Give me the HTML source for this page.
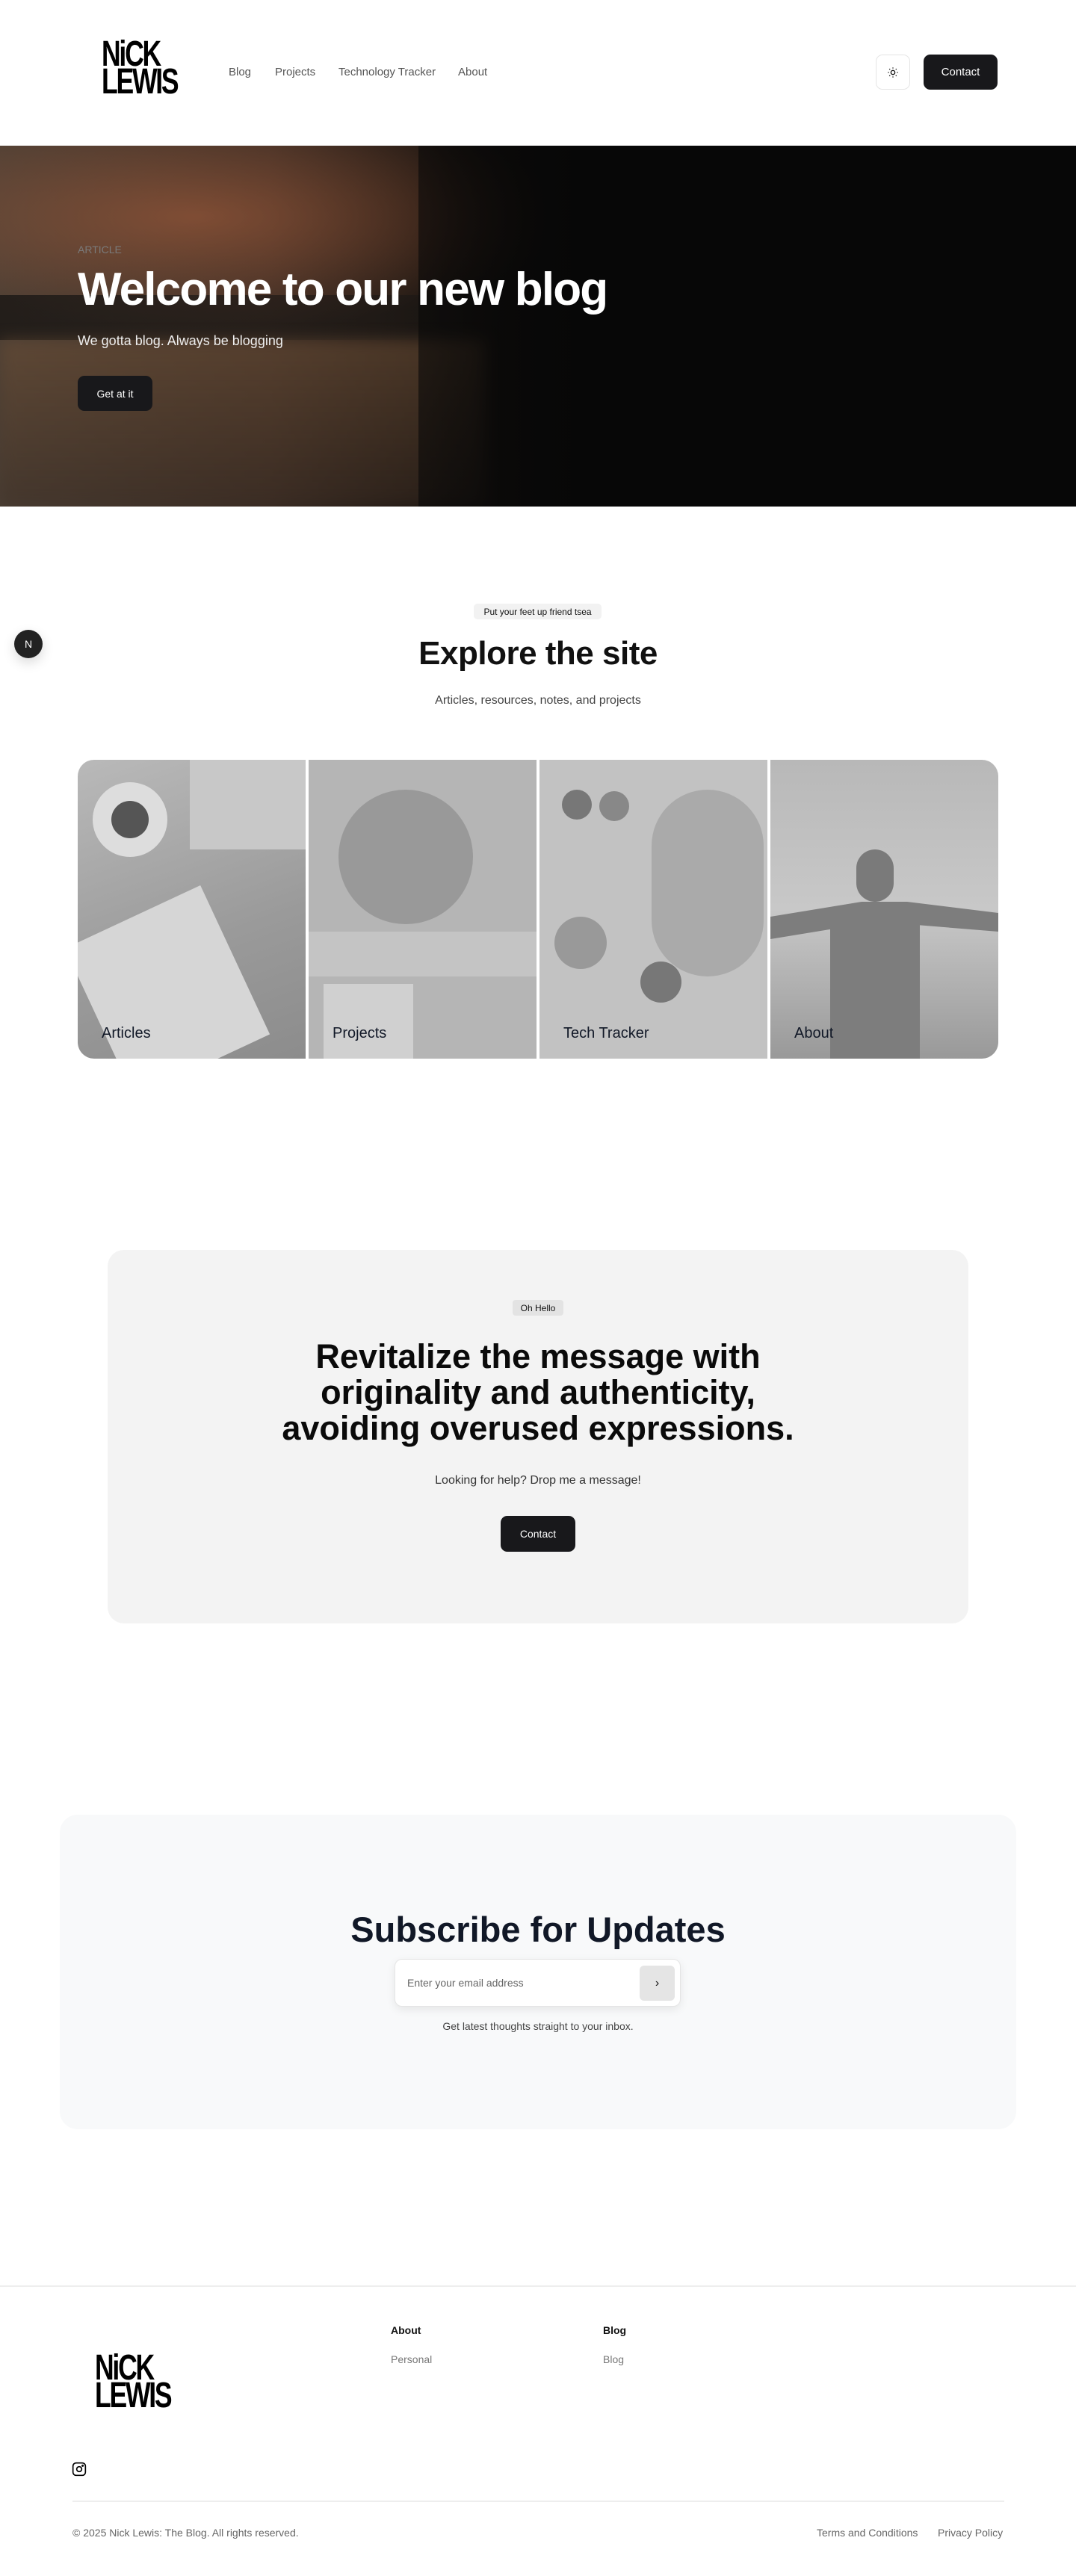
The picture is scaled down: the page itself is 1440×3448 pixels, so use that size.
<!DOCTYPE html>
<html><head><meta charset="utf-8"><style>
*{margin:0;padding:0;box-sizing:border-box}
body{width:1440px;height:3448px;background:#fff;font-family:"Liberation Sans",sans-serif;color:#111;position:relative;overflow:hidden}
.abs{position:absolute}
.logo{font-weight:700;color:#000;line-height:37px;font-size:48px;letter-spacing:-3px;transform:scaleX(.74);transform-origin:left top}
.nav a{position:absolute;top:88px;font-size:15px;color:#555;text-decoration:none}
.btn{position:absolute;background:#18181b;color:#fff;border-radius:9px;font-size:15px;display:flex;align-items:center;justify-content:center}
.hero{left:0;top:195px;width:1440px;height:483px;overflow:hidden;background:linear-gradient(90deg,#4a3e34 0%,#3a2c24 25%,#1a1410 42%,#0a0908 60%,#050505 100%)}
.card{position:absolute;top:1017px;height:400px;width:305px;overflow:hidden;background:#a9a9a9}
.card span{position:absolute;left:32px;bottom:22px;font-size:20px;color:#111827}
</style></head><body>
<div class="abs logo" style="left:136px;top:54px">NiCK<br>LEWIS</div>
<div class="nav"><a style="left:306px">Blog</a><a style="left:368px">Projects</a><a style="left:453px">Technology Tracker</a><a style="left:613px">About</a></div>
<div class="abs" style="left:1172px;top:73px;width:46px;height:47px;border:1px solid #e5e5e5;border-radius:9px;display:flex;align-items:center;justify-content:center">
<svg width="16" height="16" viewBox="0 0 24 24" fill="none" stroke="#111" stroke-width="2"><circle cx="12" cy="12" r="4"/><path d="M12 2v2M12 20v2M4.9 4.9l1.4 1.4M17.7 17.7l1.4 1.4M2 12h2M20 12h2M4.9 19.1l1.4-1.4M17.7 6.3l1.4-1.4"/></svg></div>
<div class="btn" style="left:1236px;top:73px;width:99px;height:47px">Contact</div>

<div class="abs hero">
<div class="abs" style="left:-100px;top:-40px;width:900px;height:300px;background:radial-gradient(ellipse at 40% 45%,rgba(170,95,60,.6),transparent 65%)"></div>
<div class="abs" style="left:0;top:200px;width:620px;height:60px;background:linear-gradient(90deg,rgba(25,22,20,.8),rgba(25,22,20,.5))"></div>
<div class="abs" style="left:0;top:260px;width:650px;height:223px;background:linear-gradient(180deg,rgba(110,80,55,.55),rgba(60,45,35,.4));filter:blur(10px)"></div>
<div class="abs" style="left:560px;top:0;width:880px;height:483px;background:linear-gradient(90deg,rgba(8,8,8,.6),#070707 25%)"></div>
</div>
<div class="abs" style="left:104px;top:326px;font-size:14px;color:#7a7a7a">ARTICLE</div>
<div class="abs" style="left:104px;top:352px;font-size:62px;font-weight:700;color:#fff;letter-spacing:-1.8px">Welcome to our new blog</div>
<div class="abs" style="left:104px;top:446px;font-size:18px;color:#eee">We gotta blog. Always be blogging</div>
<div class="btn" style="left:104px;top:503px;width:100px;height:47px;font-size:14px">Get at it</div>

<div class="abs" style="left:19px;top:843px;width:38px;height:38px;border-radius:50%;background:#222;color:#fff;font-size:14px;display:flex;align-items:center;justify-content:center;box-shadow:0 6px 16px rgba(0,0,0,.15)">N</div>
<div class="abs" style="left:634px;top:808px;width:171px;height:21px;background:#f2f2f2;border-radius:5px;font-size:12px;display:flex;align-items:center;justify-content:center">Put your feet up friend tsea</div>
<div class="abs" style="left:0;top:850px;width:1440px;text-align:center;font-size:44px;font-weight:700;letter-spacing:-.5px">Explore the site</div>
<div class="abs" style="left:0;top:929px;width:1440px;text-align:center;font-size:16px;color:#444">Articles, resources, notes, and projects</div>
<div class="card" style="left:104px;border-radius:22px 0 0 22px;background:linear-gradient(160deg,#b9b9b9,#9a9a9a 60%,#8c8c8c)">
<div class="abs" style="left:20px;top:30px;width:100px;height:100px;border-radius:50%;background:#ddd"></div><div class="abs" style="left:45px;top:55px;width:50px;height:50px;border-radius:50%;background:#555"></div>
<div class="abs" style="left:150px;top:0;width:155px;height:120px;background:#c8c8c8"></div>
<div class="abs" style="left:20px;top:200px;width:200px;height:220px;background:#d6d6d6;transform:rotate(-25deg)"></div><span>Articles</span></div>
<div class="card" style="left:413px;background:#b5b5b5">
<div class="abs" style="left:40px;top:40px;width:180px;height:180px;border-radius:50%;background:#999"></div>
<div class="abs" style="left:0;top:230px;width:305px;height:60px;background:#c4c4c4"></div>
<div class="abs" style="left:20px;top:300px;width:120px;height:100px;background:#d0d0d0"></div><span>Projects</span></div>
<div class="card" style="left:722px;background:#c2c2c2">
<div class="abs" style="left:30px;top:40px;width:40px;height:40px;border-radius:50%;background:#777"></div><div class="abs" style="left:80px;top:42px;width:40px;height:40px;border-radius:50%;background:#888"></div>
<div class="abs" style="left:150px;top:40px;width:150px;height:250px;border-radius:75px;background:#aaa"></div>
<div class="abs" style="left:20px;top:210px;width:70px;height:70px;border-radius:50%;background:#999"></div>
<div class="abs" style="left:135px;top:270px;width:55px;height:55px;border-radius:50%;background:#777"></div><span>Tech Tracker</span></div>
<div class="card" style="left:1031px;border-radius:0 22px 22px 0;background:linear-gradient(180deg,#b8b8b8,#c8c8c8 50%,#999)">
<div class="abs" style="left:115px;top:120px;width:50px;height:70px;border-radius:25px;background:#7a7a7a"></div>
<div class="abs" style="left:0;top:190px;width:305px;height:50px;background:#7d7d7d;clip-path:polygon(0 40%,40% 0,60% 0,100% 30%,100% 80%,60% 60%,40% 60%,0 100%)"></div>
<div class="abs" style="left:80px;top:210px;width:120px;height:190px;background:#7d7d7d"></div><span>About</span></div>

<div class="abs" style="left:144px;top:1673px;width:1152px;height:500px;background:#f3f3f3;border-radius:22px"></div>
<div class="abs" style="left:686px;top:1740px;width:68px;height:21px;background:#e3e3e3;border-radius:4px;font-size:12px;display:flex;align-items:center;justify-content:center">Oh Hello</div>
<div class="abs" style="left:0;top:1792px;width:1440px;text-align:center;font-size:45px;line-height:48px;font-weight:700;color:#0a0a0a">Revitalize the message with<br>originality and authenticity,<br>avoiding overused expressions.</div>
<div class="abs" style="left:0;top:1973px;width:1440px;text-align:center;font-size:16px;color:#333">Looking for help? Drop me a message!</div>
<div class="btn" style="left:670px;top:2029px;width:100px;height:48px;font-size:14px">Contact</div>

<div class="abs" style="left:80px;top:2429px;width:1280px;height:421px;background:#f8f9fa;border-radius:24px"></div>
<div class="abs" style="left:0;top:2555px;width:1440px;text-align:center;font-size:47px;font-weight:700;color:#111827">Subscribe for Updates</div>
<div class="abs" style="left:528px;top:2622px;width:383px;height:64px;background:#fff;border:1px solid #e5e5e5;border-radius:10px;box-shadow:0 4px 12px rgba(0,0,0,.08)">
<div class="abs" style="left:16px;top:23px;font-size:14px;color:#666">Enter your email address</div>
<div class="abs" style="left:327px;top:8px;width:47px;height:47px;background:#e5e5e5;border-radius:6px;display:flex;align-items:center;justify-content:center;font-size:16px">›</div></div>
<div class="abs" style="left:0;top:2704px;width:1440px;text-align:center;font-size:14px;color:#444">Get latest thoughts straight to your inbox.</div>

<div class="abs" style="left:0;top:3059px;width:1440px;height:2px;background:#eee"></div>
<div class="abs" style="left:523px;top:3111px;font-size:14px;font-weight:700">About</div>
<div class="abs" style="left:807px;top:3111px;font-size:14px;font-weight:700">Blog</div>
<div class="abs" style="left:523px;top:3150px;font-size:14px;color:#777">Personal</div>
<div class="abs" style="left:807px;top:3150px;font-size:14px;color:#777">Blog</div>
<div class="abs logo" style="left:127px;top:3151px">NiCK<br>LEWIS</div>
<svg class="abs" style="left:96px;top:3295px" width="20" height="20" viewBox="0 0 24 24" fill="none" stroke="#000" stroke-width="2"><rect x="2" y="2" width="20" height="20" rx="5"/><circle cx="12" cy="12" r="4"/><circle cx="17.5" cy="6.5" r=".8"/></svg>
<div class="abs" style="left:97px;top:3347px;width:1247px;height:2px;background:#eee"></div>
<div class="abs" style="left:97px;top:3382px;font-size:14px;color:#666">© 2025 Nick Lewis: The Blog. All rights reserved.</div>
<div class="abs" style="left:1093px;top:3382px;font-size:14px;color:#666">Terms and Conditions</div>
<div class="abs" style="left:1255px;top:3382px;font-size:14px;color:#666">Privacy Policy</div>
</body></html>
